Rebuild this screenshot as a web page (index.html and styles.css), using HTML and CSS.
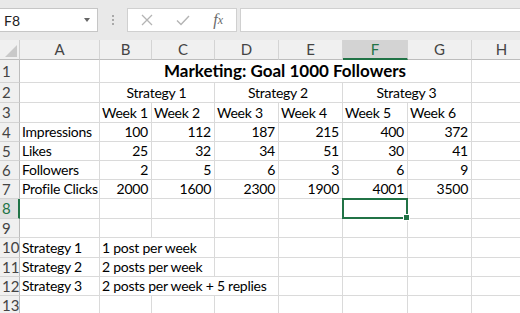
FILE: index.html
```html
<!DOCTYPE html>
<html lang="en">
<head>
    <meta charset="UTF-8">
    <title>Marketing</title>
    <link rel="stylesheet" href="styles.css">
</head>
<body>
    <div class="formula-bar">
        <div class="name-box">
            <span>F8</span>
            <span class="drop-arrow"></span>
        </div>
        <div class="grip">
            <span></span><span></span><span></span>
        </div>
        <div class="fx-buttons">
            <span class="fx-btn">
                <svg width="12" height="12" viewBox="0 0 12 12"><path d="M1 1 L11 11 M11 1 L1 11" stroke="#b4b4b4" stroke-width="1.3" fill="none"/></svg>
            </span>
            <span class="fx-btn">
                <svg width="14" height="11" viewBox="0 0 14 11"><path d="M1 5.5 L5 9.5 L13 1" stroke="#b4b4b4" stroke-width="1.4" fill="none"/></svg>
            </span>
            <span class="fx-btn fx-label">f<sub>x</sub></span>
        </div>
        <div class="formula-input"></div>
    </div>

    <table class="sheet">
        <colgroup>
            <col class="c-head">
            <col class="c-a">
            <col class="c-b">
            <col class="c-c">
            <col class="c-d">
            <col class="c-e">
            <col class="c-f">
            <col class="c-g">
            <col class="c-h">
        </colgroup>
        <tr class="col-row">
            <th class="corner">
                <svg width="12" height="12" viewBox="0 0 12 12"><polygon points="12,0 12,12 0,12" fill="#c9c9c9"/></svg>
            </th>
            <th class="col-head">A</th>
            <th class="col-head">B</th>
            <th class="col-head">C</th>
            <th class="col-head">D</th>
            <th class="col-head">E</th>
            <th class="col-head selected">F</th>
            <th class="col-head">G</th>
            <th class="col-head">H</th>
        </tr>
        <tr class="title-row">
            <th class="row-head">1</th>
            <td></td>
            <td colspan="6" class="title">Marketing: Goal 1000 Followers</td>
            <td></td>
        </tr>
        <tr class="tall">
            <th class="row-head">2</th>
            <td></td>
            <td colspan="2" class="center">Strategy 1</td>
            <td colspan="2" class="center">Strategy 2</td>
            <td colspan="2" class="center">Strategy 3</td>
            <td></td>
        </tr>
        <tr class="tall">
            <th class="row-head">3</th>
            <td></td>
            <td>Week 1</td>
            <td>Week 2</td>
            <td>Week 3</td>
            <td>Week 4</td>
            <td>Week 5</td>
            <td>Week 6</td>
            <td></td>
        </tr>
        <tr>
            <th class="row-head">4</th>
            <td>Impressions</td>
            <td class="num">100</td>
            <td class="num">112</td>
            <td class="num">187</td>
            <td class="num">215</td>
            <td class="num">400</td>
            <td class="num">372</td>
            <td></td>
        </tr>
        <tr>
            <th class="row-head">5</th>
            <td>Likes</td>
            <td class="num">25</td>
            <td class="num">32</td>
            <td class="num">34</td>
            <td class="num">51</td>
            <td class="num">30</td>
            <td class="num">41</td>
            <td></td>
        </tr>
        <tr class="short">
            <th class="row-head">6</th>
            <td>Followers</td>
            <td class="num">2</td>
            <td class="num">5</td>
            <td class="num">6</td>
            <td class="num">3</td>
            <td class="num">6</td>
            <td class="num">9</td>
            <td></td>
        </tr>
        <tr>
            <th class="row-head">7</th>
            <td>Profile Clicks</td>
            <td class="num">2000</td>
            <td class="num">1600</td>
            <td class="num">2300</td>
            <td class="num">1900</td>
            <td class="num">4001</td>
            <td class="num">3500</td>
            <td></td>
        </tr>
        <tr class="tall">
            <th class="row-head selected">8</th>
            <td></td>
            <td></td>
            <td></td>
            <td></td>
            <td></td>
            <td class="active"></td>
            <td></td>
            <td></td>
        </tr>
        <tr>
            <th class="row-head">9</th>
            <td></td><td></td><td></td><td></td><td></td><td></td><td></td><td></td>
        </tr>
        <tr class="tall">
            <th class="row-head">10</th>
            <td>Strategy 1</td>
            <td colspan="2">1 post per week</td>
            <td></td><td></td><td></td><td></td><td></td>
        </tr>
        <tr>
            <th class="row-head">11</th>
            <td>Strategy 2</td>
            <td colspan="2">2 posts per week</td>
            <td></td><td></td><td></td><td></td><td></td>
        </tr>
        <tr>
            <th class="row-head">12</th>
            <td>Strategy 3</td>
            <td colspan="3">2 posts per week + 5 replies</td>
            <td></td><td></td><td></td><td></td>
        </tr>
        <tr>
            <th class="row-head">13</th>
            <td></td><td></td><td></td><td></td><td></td><td></td><td></td><td></td>
        </tr>
    </table>
</body>
</html>
```

FILE: styles.css
```css
* {
    margin: 0;
    padding: 0;
    box-sizing: border-box;
}

body {
    width: 520px;
    height: 313px;
    overflow: hidden;
    background-color: #ffffff;
    font-family: Lato, "Open Sans", sans-serif;
    color: #000000;
}

/* formula bar */
.formula-bar {
    display: flex;
    height: 40px;
    padding-top: 8px;
    padding-bottom: 8px;
    background-color: #e9e9e9;
}

.name-box {
    width: 99px;
    margin-left: -1px;
    background-color: #ffffff;
    border: 1px solid #c6c6c6;
    display: flex;
    align-items: center;
    justify-content: space-between;
    padding: 0 7px 0 4px;
    font-size: 14px;
    color: #222;
}

.drop-arrow {
    width: 0;
    height: 0;
    border-left: 3.5px solid transparent;
    border-right: 3.5px solid transparent;
    border-top: 4px solid #666;
}

.grip {
    width: 29px;
    display: flex;
    flex-direction: column;
    align-items: center;
    justify-content: center;
    gap: 2px;
}

.grip span {
    width: 2px;
    height: 2px;
    background-color: #a9a9a9;
}

.fx-buttons {
    width: 110px;
    display: flex;
    background-color: #ffffff;
    border: 1px solid #d0d0d0;
    padding-left: 1px;
}

.fx-btn {
    width: 36px;
    display: flex;
    align-items: center;
    justify-content: center;
}

.fx-label {
    font-family: "Liberation Serif", serif;
    font-style: italic;
    font-size: 16px;
    color: #6a6a6a;
}

.fx-label sub {
    font-size: 12px;
    vertical-align: -2px;
}

.formula-input {
    flex-grow: 1;
    margin-left: 3px;
    margin-right: -1px;
    background-color: #ffffff;
    border: 1px solid #d0d0d0;
}

/* grid */
.sheet {
    border-collapse: separate;
    border-spacing: 0;
    table-layout: fixed;
    width: 532px;
    font-size: 14px;
}

.c-head { width: 20px; }
.c-a { width: 80px; }
.c-b { width: 52px; }
.c-c { width: 63px; }
.c-d { width: 64px; }
.c-e { width: 64px; }
.c-f { width: 65px; }
.c-g { width: 64px; }
.c-h { width: 60px; }

tr { height: 19px; }
tr.col-row { height: 20px; }
tr.title-row { height: 23px; }
tr.tall { height: 20px; }
tr.short { height: 18px; }

td {
    border-right: 1px solid #dadada;
    border-bottom: 1px solid #dadada;
    padding: 0 3px 1px 2px;
    vertical-align: bottom;
    white-space: nowrap;
    overflow: hidden;
    line-height: 17px;
    letter-spacing: -0.25px;
}

td.num { text-align: right; }
td.center { text-align: center; }

td.title {
    text-align: center;
    font-weight: bold;
    font-size: 17px;
    line-height: 22px;
    padding-bottom: 0;
    letter-spacing: 0;
}

td.active {
    position: relative;
    overflow: visible;
}

/* selection frame over the cell */
td.active::after {
    content: "";
    position: absolute;
    top: -1px;
    left: -1px;
    right: -1px;
    bottom: -1px;
    border: 2px solid #217346;
}

td.active::before {
    content: "";
    position: absolute;
    right: -3px;
    bottom: -3px;
    width: 5px;
    height: 5px;
    background-color: #217346;
    border: 1px solid #ffffff;
    z-index: 1;
}

.corner {
    background-color: #f0f0f0;
    border-right: 1px solid #cfcfcf;
    border-bottom: 1px solid #bdbdbd;
    text-align: right;
    vertical-align: bottom;
    padding: 0 2px 2px 0;
    line-height: 0;
}

.col-head {
    background-color: #f0f0f0;
    border-right: 1px solid #d4d4d4;
    border-bottom: 1px solid #bdbdbd;
    font-weight: normal;
    font-size: 15px;
    color: #444444;
    text-align: center;
    vertical-align: middle;
    line-height: 17px;
}

.col-head.selected {
    background-color: #d3d3d3;
    border-bottom: 2px solid #217346;
    color: #217346;
}

.row-head {
    background-color: #f0f0f0;
    border-right: 1px solid #bdbdbd;
    border-bottom: 1px solid #d4d4d4;
    font-weight: normal;
    font-size: 15px;
    color: #444444;
    text-align: left;
    padding-left: 2px;
    vertical-align: middle;
    line-height: 17px;
}

.row-head.selected {
    background-color: #e1e1e1;
    border-right: 2px solid #217346;
    color: #217346;
}
```
